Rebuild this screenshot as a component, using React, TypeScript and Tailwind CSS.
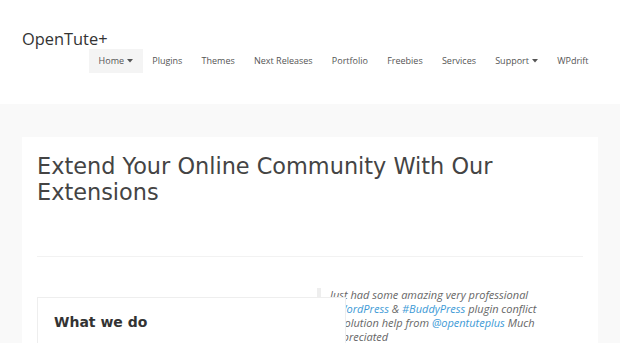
import React from "react";

const navItems = [
  { label: "Home", caret: true, active: true },
  { label: "Plugins" },
  { label: "Themes" },
  { label: "Next Releases" },
  { label: "Portfolio" },
  { label: "Freebies" },
  { label: "Services" },
  { label: "Support", caret: true },
  { label: "WPdrift" },
];

function Caret() {
  return (
    <svg width="6" height="4" viewBox="0 0 6 4" className="ml-[3px] inline-block">
      <path d="M0 0 L6 0 L3 3.5 Z" fill="#555" />
    </svg>
  );
}

export default function App() {
  return (
    <div className="h-[343px] w-[620px] overflow-hidden bg-[#f9f9f9]">
      <header className="h-[104px] bg-white px-[22px] pt-[29px]">
        <div
          className="text-[16.4px] leading-[20px] text-[#333]"
          style={{ fontFamily: '"Open Sans", sans-serif' }}
        >
          OpenTute+
        </div>
        <nav
          className="ml-[67px] flex whitespace-nowrap text-[9px] text-[#555]"
          style={{ fontFamily: '"Open Sans", sans-serif' }}
        >
          {navItems.map((it) => (
            <div
              key={it.label}
              className={
                "flex h-[24px] shrink-0 items-center px-[9.6px] " +
                (it.active ? "bg-[#f4f4f4]" : "")
              }
            >
              {it.label}
              {it.caret ? <Caret /> : null}
            </div>
          ))}
        </nav>
      </header>

      <main className="mx-[22px] mt-[33px] bg-white px-[15px] pt-[16px] pb-[40px]">
        <h1
          className="text-[22.4px] leading-[26px] text-[#444]"
          style={{ fontFamily: '"DejaVu Sans", sans-serif' }}
        >
          Extend Your Online Community With Our
          <br />
          Extensions
        </h1>
        <div className="mt-[51px] h-[1px] w-[546px] bg-[#f2f2f2]" />
        <div className="mt-[31px] flex items-start">
          <div className="relative z-10 mt-[9px] w-[309px] shrink-0 border border-[#eeeeee] bg-white px-[16px] pt-[13px] pb-[20px]">
            <h2
              className="text-[14px] font-bold leading-[22px] text-[#333]"
              style={{ fontFamily: '"DejaVu Sans", sans-serif' }}
            >
              What we do
            </h2>
            <p
              className="mt-[8px] text-[11px] leading-[16px] text-[#777]"
              style={{ fontFamily: '"DejaVu Sans", sans-serif' }}
            >
              We build beautiful and functional plugins and themes for your community.
            </p>
          </div>
          <blockquote
            className="ml-[-29px] border-l-[4px] border-[#eeeeee] pl-[9px] text-[11px] italic leading-[14px] text-[#666]"
            style={{ fontFamily: '"Open Sans", sans-serif' }}
          >
            <p>
              Just had some amazing very professional
              <br />
              <span className="text-[#3d9ad6]">#WordPress</span> &amp;{" "}
              <span className="text-[#3d9ad6]">#BuddyPress</span> plugin conflict
              <br />
              resolution help from <span className="text-[#3d9ad6]">@opentuteplus</span> Much
              <br />
              appreciated
            </p>
          </blockquote>
        </div>
      </main>
    </div>
  );
}
